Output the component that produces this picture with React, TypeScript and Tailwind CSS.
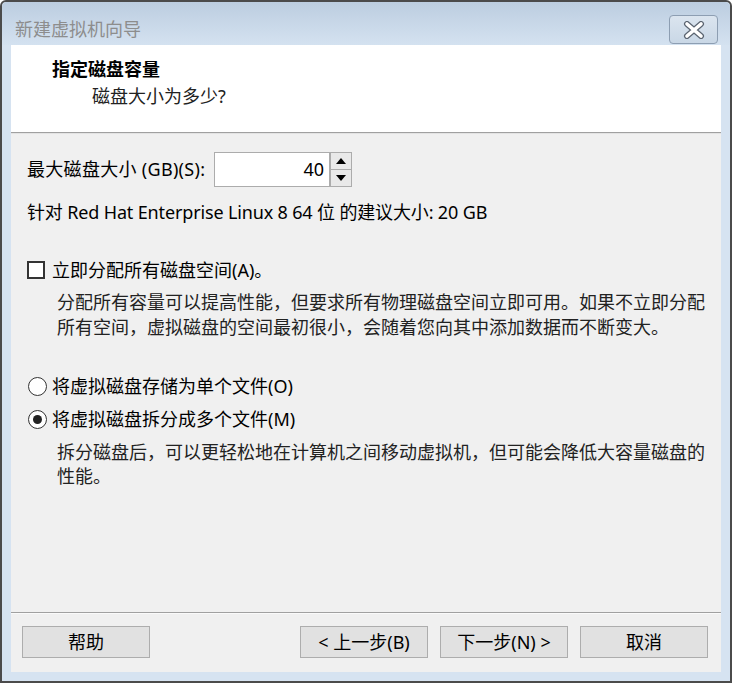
import React from "react";

const CJK = "font-['Segoe_UI','Noto_Sans','Noto_Sans_CJK_SC',sans-serif]";

function CloseIcon() {
  return (
    <svg width="22" height="18" viewBox="0 0 22 18">
      <path d="M4 3 L18 15 M18 3 L4 15" stroke="#5b6470" strokeWidth="6" strokeLinecap="round" />
      <path d="M4 3 L18 15 M18 3 L4 15" stroke="#ffffff" strokeWidth="3.6" strokeLinecap="round" />
    </svg>
  );
}

function Spinner() {
  return (
    <div className="flex flex-col w-[22px] h-[35px] border border-[#acacac] bg-[#e9e9e9]">
      <div className="flex-1 flex items-center justify-center border-b border-[#acacac]">
        <svg width="10" height="6" viewBox="0 0 10 6"><path d="M0 6 L5 0 L10 6 Z" fill="#000" /></svg>
      </div>
      <div className="flex-1 flex items-center justify-center">
        <svg width="10" height="6" viewBox="0 0 10 6"><path d="M0 0 L5 6 L10 0 Z" fill="#000" /></svg>
      </div>
    </div>
  );
}

function Btn({ children }: { children: React.ReactNode }) {
  return (
    <div className="w-[128px] h-[32px] border border-[#adadad] bg-[#e1e1e1] flex items-center justify-center text-[18px] text-[#000]">
      {children}
    </div>
  );
}

export default function App() {
  return (
    <div className={`w-[732px] h-[683px] flex flex-col border-2 border-[#4b4b4b] rounded-t-[6px] bg-[#d6e3f1] ${CJK}`}>
      {/* title bar */}
      <div className="h-[43px] flex items-center justify-between pl-[13px] pr-[12px] bg-gradient-to-b from-[#bccde0] to-[#d4e2f0] rounded-t-[5px]">
        <span className="text-[18px] text-[#8d8d8d] mt-[12px]">新建虚拟机向导</span>
        <div className="w-[49px] h-[29px] mt-[12px] rounded-[4px] border border-[#8d9eb2] bg-gradient-to-b from-[#dbe5ef] to-[#c9d7e6] flex items-center justify-center">
          <CloseIcon />
        </div>
      </div>

      {/* client */}
      <div className="flex-1 mx-[9px] mb-[9px] flex flex-col bg-[#f0f0f0]">
        <div className="h-[87px] bg-white pt-[13px]">
          <div className="pl-[41px] text-[18px] font-bold text-black leading-[22px]">指定磁盘容量</div>
          <div className="pl-[81px] mt-[5px] text-[18px] text-[#222] leading-[22px]">磁盘大小为多少?</div>
        </div>
        <div className="h-px bg-[#a0a0a0]" />
        <div className="h-px bg-[#e3e3e3]" />

        <div className="flex-1 flex flex-col pl-[16px] pr-[13px] text-black whitespace-nowrap">
          <div className="mt-[18px] h-[35px] flex items-center">
            <span className="text-[18px] w-[187px] tracking-[0.3px]">最大磁盘大小 (GB)(S):</span>
            <div className="w-[116px] h-[35px] bg-white border border-[#acacac] flex items-center justify-end pr-[5px] text-[18px]">40</div>
            <Spinner />
          </div>

          <div className="mt-[13px] h-[24px] flex items-center text-[18px] tracking-[-0.15px]">
            针对 Red Hat Enterprise Linux 8 64 位 的建议大小: 20 GB
          </div>

          <div className="mt-[34px] h-[24px] flex items-center">
            <div className="w-[18px] h-[18px] border-2 border-[#333] bg-white" />
            <span className="ml-[7px] text-[18px]">立即分配所有磁盘空间(A)。</span>
          </div>

          <div className="mt-[8px] pl-[30px] text-[18px] leading-[25px] text-[#222]">
            分配所有容量可以提高性能，但要求所有物理磁盘空间立即可用。如果不立即分配<br />
            所有空间，虚拟磁盘的空间最初很小，会随着您向其中添加数据而不断变大。
          </div>

          <div className="mt-[34px] h-[24px] flex items-center">
            <div className="w-[19px] h-[19px] rounded-full border-[1.5px] border-[#333] bg-white ml-[1px]" />
            <span className="ml-[5px] text-[18px]">将虚拟磁盘存储为单个文件(O)</span>
          </div>

          <div className="mt-[9px] h-[24px] flex items-center">
            <div className="w-[19px] h-[19px] rounded-full border-[1.5px] border-[#333] bg-white ml-[1px] flex items-center justify-center">
              <div className="w-[9px] h-[9px] rounded-full bg-[#222]" />
            </div>
            <span className="ml-[5px] text-[18px]">将虚拟磁盘拆分成多个文件(M)</span>
          </div>

          <div className="mt-[9px] pl-[30px] text-[18px] leading-[24px] text-[#222]">
            拆分磁盘后，可以更轻松地在计算机之间移动虚拟机，但可能会降低大容量磁盘的<br />
            性能。
          </div>
        </div>

        <div className="h-px bg-[#a0a0a0]" />
        <div className="h-px bg-[#fafafa]" />
        <div className="h-[58px] flex items-start pt-[12px] pl-[11px] pr-[13px]">
          <Btn>帮助</Btn>
          <div className="flex-1" />
          <div className="flex gap-[12px]">
            <Btn>&lt; 上一步(B)</Btn>
            <Btn>下一步(N) &gt;</Btn>
            <Btn>取消</Btn>
          </div>
        </div>
      </div>
    </div>
  );
}
